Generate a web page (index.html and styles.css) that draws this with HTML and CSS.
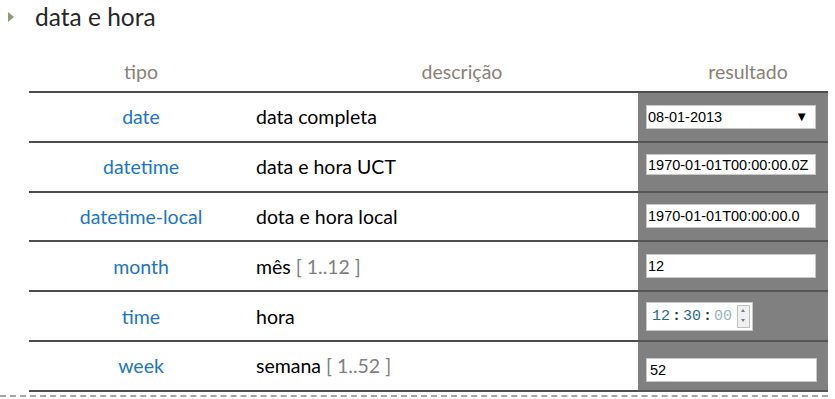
FILE: index.html
```html
<!DOCTYPE html>
<html lang="pt">
<head>
    <meta charset="UTF-8">
    <title>data e hora</title>
    <link rel="stylesheet" href="styles.css">
</head>
<body>
    <div class="slide">
        <h1 class="slide-title"><span class="bullet"></span>data e hora</h1>

        <table class="types">
            <colgroup>
                <col class="w-type">
                <col class="w-desc">
                <col class="w-result">
            </colgroup>
            <thead>
                <tr>
                    <th class="col-type">tipo</th>
                    <th class="col-desc">descrição</th>
                    <th class="col-result">resultado</th>
                </tr>
            </thead>
            <tbody>
                <tr>
                    <td class="col-type">date</td>
                    <td class="col-desc">data completa</td>
                    <td class="col-result">
                        <div class="field field-select">08-01-2013<span class="caret">▼</span></div>
                    </td>
                </tr>
                <tr>
                    <td class="col-type">datetime</td>
                    <td class="col-desc">data e hora UCT</td>
                    <td class="col-result">
                        <div class="field field-short">1970-01-01T00:00:00.0Z</div>
                    </td>
                </tr>
                <tr>
                    <td class="col-type">datetime-local</td>
                    <td class="col-desc">dota e hora local</td>
                    <td class="col-result">
                        <div class="field">1970-01-01T00:00:00.0</div>
                    </td>
                </tr>
                <tr>
                    <td class="col-type">month</td>
                    <td class="col-desc">mês <span class="range">[ 1..12 ]</span></td>
                    <td class="col-result">
                        <div class="field">12</div>
                    </td>
                </tr>
                <tr>
                    <td class="col-type">time</td>
                    <td class="col-desc">hora</td>
                    <td class="col-result">
                        <div class="field field-time">
                            <span class="seg">12</span><span class="sep">:</span><span class="seg">30</span><span class="sep">:</span><span class="seg seg-dim">00</span>
                            <span class="spin"><span class="spin-up"></span><span class="spin-down"></span></span>
                        </div>
                    </td>
                </tr>
                <tr>
                    <td class="col-type">week</td>
                    <td class="col-desc">semana <span class="range">[ 1..52 ]</span></td>
                    <td class="col-result">
                        <div class="field field-week">52</div>
                    </td>
                </tr>
            </tbody>
        </table>
    </div>
</body>
</html>
```

FILE: styles.css
```css
body {
    margin: 0;
    background-color: white;
    font-family: Lato, 'Open Sans', sans-serif;
}

.slide {
    width: 835px;
    height: 399px;
    overflow: hidden;
    position: relative;
}

/* dashed rule under the slide */
.slide::after {
    content: "";
    position: absolute;
    left: 0;
    right: 7px;
    bottom: 2px;
    border-bottom: 2px dashed #a6a6a6;
}

.slide-title {
    display: flex;
    align-items: center;
    margin: 0;
    padding: 1px 0 0 8px;
    height: 31px;
    font-size: 24.5px;
    font-weight: normal;
    color: #262626;
}

.bullet {
    width: 0;
    height: 0;
    border-top: 5px solid transparent;
    border-bottom: 5px solid transparent;
    border-left: 6px solid #8c9c74;
    margin-right: 21px;
}

.types {
    border-collapse: collapse;
    table-layout: fixed;
    margin: 19px 0 0 29px;
    width: 799px;
    font-size: 19.5px;
}

.w-type { width: 224px; }
.w-desc { width: 385px; }
.w-result { width: 190px; }

.types th {
    font-weight: normal;
    color: #8a8077;
    height: 40px;
    padding: 0;
    border-bottom: 2px solid #4d4d4d;
}

.types td {
    height: 47.8px;
    padding: 0;
    border-bottom: 2px solid #4d4d4d;
}

.col-type {
    text-align: center;
}

td.col-type {
    color: #1a75c4;
}

.col-desc {
    text-align: left;
    color: black;
}

td.col-desc {
    padding-left: 3px;
}

th.col-desc {
    text-align: center;
    padding-left: 33px;
}

th.col-result {
    text-align: center;
    padding-left: 30px;
}

td.col-result {
    background-color: #808080;
    padding-left: 8px;
    border-bottom-color: #555;
}

.range {
    color: #7f7f7f;
}

/* form controls drawn as plain boxes */
.field {
    display: flex;
    align-items: center;
    box-sizing: border-box;
    width: 170px;
    height: 24px;
    padding: 0 1px;
    background-color: white;
    border: 1px solid #c8c8c8;
    font-family: 'Liberation Sans', Arial, sans-serif;
    font-size: 14.5px;
    white-space: nowrap;
    overflow: hidden;
    color: black;
}

.field-select {
    justify-content: space-between;
    padding-right: 7px;
}

.caret {
    font-size: 13px;
}

.field-short {
    height: 21px;
    margin-top: -4px;
}

.field-week {
    margin-top: 8px;
    width: 171px;
    padding-left: 3px;
}

.field-time {
    width: 107px;
    height: 29px;
    padding: 0 2px 0 5px;
    font-family: 'Liberation Mono', monospace;
    font-size: 15px;
    color: #2a6a8a;
}

.sep {
    color: #333;
    font-weight: bold;
    margin: 0 2px;
}

.seg-dim {
    color: #9ab4c2;
}

.spin {
    display: flex;
    flex-direction: column;
    margin-left: auto;
    width: 11px;
    height: 21px;
    border: 1px solid #c0c0c0;
    background-color: #f0f0f0;
}

.spin-up, .spin-down {
    flex: 1;
    position: relative;
}

.spin-up::after, .spin-down::after {
    content: "";
    position: absolute;
    left: 3px;
    top: 3px;
    border-left: 2px solid transparent;
    border-right: 2px solid transparent;
}

.spin-up::after {
    border-bottom: 3px solid #6a7a9a;
}

.spin-down::after {
    border-top: 3px solid #6a7a9a;
}
```
